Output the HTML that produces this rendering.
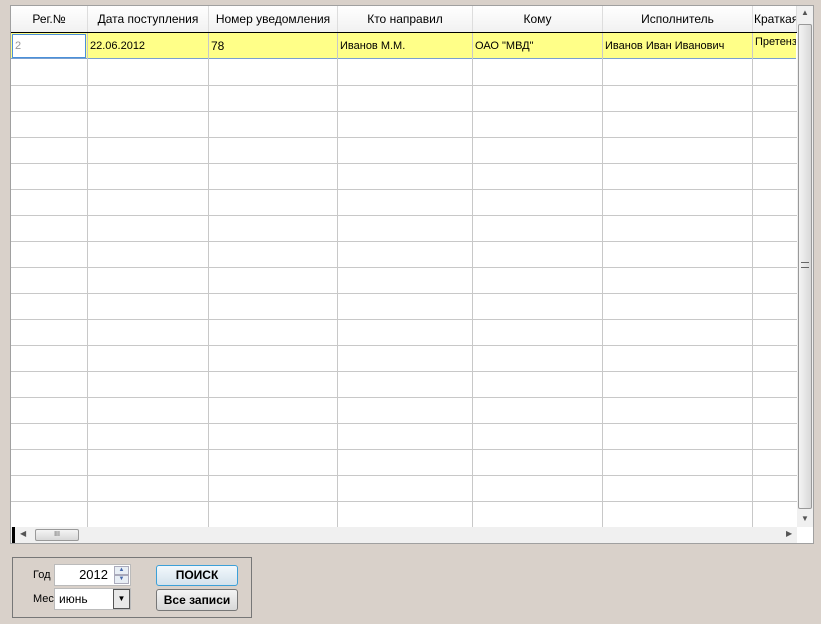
<!DOCTYPE html><html><head><meta charset="utf-8"><style>
body{margin:0;width:821px;height:624px;background:#d9d1ca;font-family:"Liberation Sans",sans-serif;position:relative;overflow:hidden}
.abs{position:absolute}
.panel{left:10px;top:5px;width:804px;height:539px;background:#fff;border:1px solid #a0a0a0;box-sizing:border-box}
.hd{top:6px;height:26px;background:linear-gradient(#fff,#f1f1f1);font-size:12px;color:#000;line-height:26px;text-align:center;border-right:1px solid #ddd;box-sizing:border-box;overflow:hidden;white-space:nowrap}
.vl{width:1px;background:#c8c8c8;top:33px;height:494px}
.hl{height:1px;background:#c8c8c8;left:11px;width:786px}
.c{top:33px;height:26px;line-height:26px;font-size:11px;white-space:nowrap;overflow:hidden}
</style></head><body>
<div class="abs panel"></div>
<div class="abs hd" style="left:11px;width:77px">Рег.№</div>
<div class="abs hd" style="left:88px;width:121px">Дата поступления</div>
<div class="abs hd" style="left:209px;width:129px">Номер уведомления</div>
<div class="abs hd" style="left:338px;width:135px">Кто направил</div>
<div class="abs hd" style="left:473px;width:130px">Кому</div>
<div class="abs hd" style="left:603px;width:150px">Исполнитель</div>
<div class="abs hd" style="left:753px;width:44px;text-align:left;padding-left:1px">Краткая</div>
<div class="abs" style="left:11px;top:32px;width:786px;height:1px;background:#000"></div>
<div class="abs" style="left:11px;top:33px;width:785px;height:26px;background:#ffff88;border-bottom:1px solid #7aa0d0;box-sizing:border-box"></div>
<div class="abs" style="left:12px;top:34px;width:74px;height:24px;background:#fff;border:1px solid #4a90d9;box-sizing:border-box;font-size:11px;color:#999;line-height:22px;padding-left:2px">2</div>
<div class="abs vl" style="left:87px"></div><div class="abs vl" style="left:208px"></div><div class="abs vl" style="left:337px"></div><div class="abs vl" style="left:472px"></div><div class="abs vl" style="left:602px"></div><div class="abs vl" style="left:752px"></div>
<div class="abs c" style="left:90px">22.06.2012</div>
<div class="abs c" style="left:211px;font-size:12px">78</div>
<div class="abs c" style="left:340px">Иванов М.М.</div>
<div class="abs c" style="left:475px">ОАО "МВД"</div>
<div class="abs c" style="left:605px">Иванов Иван Иванович</div>
<div class="abs c" style="left:755px;width:41px;line-height:18px">Претензия</div>
<div class="abs hl" style="top:85px"></div><div class="abs hl" style="top:111px"></div><div class="abs hl" style="top:137px"></div><div class="abs hl" style="top:163px"></div><div class="abs hl" style="top:189px"></div><div class="abs hl" style="top:215px"></div><div class="abs hl" style="top:241px"></div><div class="abs hl" style="top:267px"></div><div class="abs hl" style="top:293px"></div><div class="abs hl" style="top:319px"></div><div class="abs hl" style="top:345px"></div><div class="abs hl" style="top:371px"></div><div class="abs hl" style="top:397px"></div><div class="abs hl" style="top:423px"></div><div class="abs hl" style="top:449px"></div><div class="abs hl" style="top:475px"></div><div class="abs hl" style="top:501px"></div>
<!-- vscroll -->
<div class="abs" style="left:797px;top:6px;width:16px;height:521px;background:#f0f0f0"></div>
<div class="abs" style="left:797px;top:8px;width:16px;font-size:8px;text-align:center;color:#555">▲</div>
<div class="abs" style="left:798px;top:24px;width:14px;height:485px;background:linear-gradient(90deg,#f4f4f4,#d8d8d8);border:1px solid #999;border-radius:2px;box-sizing:border-box"></div>
<div class="abs" style="left:801px;top:262px;width:8px;height:6px;border-top:1px solid #666;border-bottom:1px solid #666;box-sizing:border-box"></div>
<div class="abs" style="left:797px;top:514px;width:16px;font-size:8px;text-align:center;color:#555">▼</div>
<!-- hscroll -->
<div class="abs" style="left:11px;top:527px;width:786px;height:16px;background:#f0f0f0"></div>
<div class="abs" style="left:12px;top:527px;width:3px;height:16px;background:#000"></div>
<div class="abs" style="left:20px;top:529px;font-size:8px;color:#555">◀</div>
<div class="abs" style="left:35px;top:529px;width:44px;height:12px;background:linear-gradient(#f4f4f4,#d8d8d8);border:1px solid #999;border-radius:2px;box-sizing:border-box;font-size:7px;text-align:center;line-height:10px;color:#555">III</div>
<div class="abs" style="left:786px;top:529px;font-size:8px;color:#555">▶</div>
<!-- group -->
<div class="abs" style="left:12px;top:557px;width:240px;height:61px;border:1px solid #777;box-sizing:border-box"></div>
<div class="abs" style="left:33px;top:569px;font-size:11px">Год</div>
<div class="abs" style="left:33px;top:593px;font-size:11px">Мес</div>
<div class="abs" style="left:54px;top:564px;width:77px;height:22px;background:#fff;border:1px solid #bbb;box-sizing:border-box;font-size:13px;line-height:20px;text-align:right;padding-right:22px">2012</div>
<div class="abs" style="left:114px;top:566px;width:15px;height:9px;background:#e8eef5;border:1px solid #aab;box-sizing:border-box;font-size:6px;text-align:center;line-height:7px;color:#46a">▲</div>
<div class="abs" style="left:114px;top:575px;width:15px;height:9px;background:#e8eef5;border:1px solid #aab;box-sizing:border-box;font-size:6px;text-align:center;line-height:7px;color:#46a">▼</div>
<div class="abs" style="left:54px;top:588px;width:77px;height:22px;background:#fff;border:1px solid #bbb;box-sizing:border-box;font-size:12px;line-height:20px;padding-left:4px">июнь</div>
<div class="abs" style="left:113px;top:589px;width:17px;height:20px;background:#e8e8e8;border:1px solid #555;box-sizing:border-box;font-size:8px;text-align:center;line-height:18px">▼</div>
<div class="abs" style="left:156px;top:565px;width:82px;height:21px;background:linear-gradient(#f2f8fc,#d4e2ec);border:1px solid #3ca0d8;border-radius:3px;box-sizing:border-box;font-size:12px;font-weight:bold;text-align:center;line-height:19px">ПОИСК</div>
<div class="abs" style="left:156px;top:589px;width:82px;height:22px;background:linear-gradient(#f4f4f4,#d8d8d8);border:1px solid #777;border-radius:3px;box-sizing:border-box;font-size:12px;font-weight:bold;text-align:center;line-height:20px">Все записи</div>
</body></html>
